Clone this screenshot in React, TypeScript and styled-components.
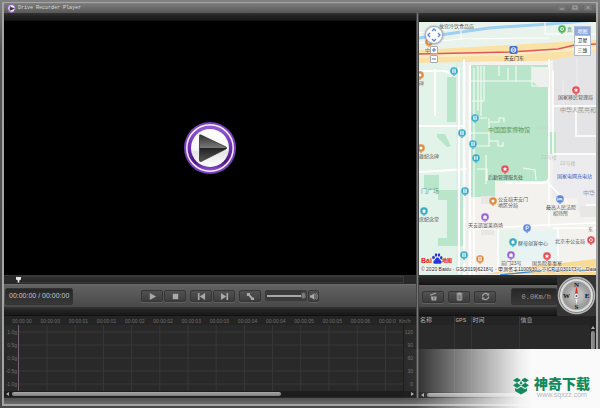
import React from "react";
import styled, { createGlobalStyle } from "styled-components";

const sans = `"Liberation Sans", "Noto Sans CJK SC", sans-serif`;
const mono = `"Liberation Mono", "Noto Sans CJK SC", monospace`;

const GlobalStyle = createGlobalStyle`
  * { box-sizing: border-box; }
  html, body, #root { height: 100%; margin: 0; }
  body { background: #464646; font-family: ${sans}; overflow: hidden; }
  button { padding: 0; margin: 0; font-family: inherit; cursor: pointer; }
  svg { display: block; }
`;

const Frame = styled.div`
  height: 100%;
  padding: 2px;
  background: linear-gradient(#808080, #555 12%, #484848);
  position: relative;
`;

const Window = styled.div`
  height: 100%;
  display: flex;
  flex-direction: column;
  border: 2px solid #a4a4a4;
  border-top: 1px solid #a8a8a8;
  background: #1a1a1a;
`;

const TitleBar = styled.header`
  flex: none;
  height: 10px;
  display: flex;
  align-items: center;
  gap: 2px;
  padding: 0 3px;
  background: linear-gradient(#7e7e7e, #575757);
`;

const Title = styled.h1`
  flex: 1;
  margin: 0;
  font: 400 5px/8px ${mono};
  color: #dcdcdc;
`;

const WindowButtons = styled.div`
  display: flex;
  gap: 3px;
`;

const WindowButton = styled.button`
  width: 10px;
  height: 6px;
  margin-bottom: 1px;
  display: grid;
  place-items: center;
  border: 1px solid #686868;
  border-top: 0;
  background: #747474;
`;

const Main = styled.main`
  flex: 1;
  min-height: 0;
  display: grid;
  grid-template-columns: minmax(0, 1fr) 3px 177px;
`;

const Pane = styled.section`
  min-width: 0;
  min-height: 0;
  display: flex;
  flex-direction: column;
`;

const Divider = styled.div`
  background: linear-gradient(90deg, #2a2a2a, #777 50%, #2a2a2a);
`;

const Band = styled.div<{ $height: number }>`
  flex: none;
  height: ${(p) => p.$height}px;
  background: linear-gradient(#343434, #222 45%, #181818);
  border-bottom: 1px solid #111;
`;

const Video = styled.div`
  flex: 1;
  min-height: 0;
  display: grid;
  place-items: center;
  background: #000;
`;

const BigPlay = styled.button`
  border: 0;
  border-radius: 50%;
  background: none;
`;

const Timeline = styled.div`
  flex: none;
  height: 10px;
  display: flex;
  padding: 0 12px;
  background: #292929;
  border-top: 1px solid #333;
  border-bottom: 1px solid #6c6c6c;
`;

const SeekBar = styled.input`
  appearance: none;
  flex: 1;
  min-width: 0;
  height: 7px;
  margin: 0;
  background: linear-gradient(#303030, #252525);
  border: 1px solid #3a3a3a;
  border-left: 0;
  &::-webkit-slider-thumb {
    appearance: none;
    width: 5px;
    height: 6px;
    background: #e8e8e8;
    clip-path: polygon(0 0, 100% 0, 100% 50%, 65% 65%, 65% 100%, 35% 100%, 35% 65%, 0 50%);
  }
`;

const Toolbar = styled.div`
  flex: none;
  height: 22px;
  display: flex;
  align-items: center;
  padding: 0 1px;
  background: linear-gradient(#626262, #484848);
`;

const Readout = styled.output<{ $mono?: boolean }>`
  height: 17px;
  flex: none;
  display: flex;
  align-items: center;
  padding: 0 ${(p) => (p.$mono ? 5 : 3)}px;
  border: 1px solid #333;
  border-radius: 2px;
  background: linear-gradient(#262626, #383838);
  color: ${(p) => (p.$mono ? "#9a9a9a" : "#c8c8c8")};
  font: 400 7px/8px ${(p) => (p.$mono ? mono : sans)};
  white-space: nowrap;
`;

const Controls = styled.div`
  display: flex;
  align-items: center;
  gap: 4px;
  margin-left: 68px;
`;

const ButtonGroup = styled.div<{ $gap?: number }>`
  display: flex;
  gap: ${(p) => p.$gap ?? 1}px;
`;

const ToolButton = styled.button<{ $width?: number }>`
  width: ${(p) => p.$width ?? 22}px;
  height: 12px;
  display: grid;
  place-items: center;
  border: 1px solid #363636;
  border-radius: 2px;
  background: linear-gradient(#525252, #3d3d3d);
  box-shadow: 0 1px 0 #606060;
  color: #a9a9a9;
`;

const Volume = styled.label`
  display: flex;
  align-items: center;
  width: 42px;
  height: 11px;
  padding: 0 1px 0 2px;
  border-radius: 2px;
  background: #3b3b3b;
`;

const VolumeRange = styled.input`
  appearance: none;
  width: 100%;
  height: 8px;
  margin: 0;
  background: linear-gradient(#0000 3px, #a8a8a8 3px, #a8a8a8 5px, #0000 5px);
  &::-webkit-slider-thumb {
    appearance: none;
    width: 5px;
    height: 7px;
    border-radius: 3px;
    border: 1px solid #555;
    background: #7d7d7d;
  }
`;

const ChartArea = styled.div`
  flex: none;
  height: 82px;
  display: flex;
  flex-direction: column;
  overflow: hidden;
  background: #292929;
`;

const ChartSlot = styled.div`
  height: 75px;
  overflow: hidden;
`;

const ScrollRow = styled.div`
  height: 6px;
  flex: none;
  display: flex;
  align-items: center;
  justify-content: space-between;
  gap: 2px;
  padding: 0 2px;
  background: #1d1d1d;
`;

const ScrollTrack = styled.div`
  flex: 1;
`;

const ScrollThumb = styled.div<{ $size: number }>`
  width: ${(p) => p.$size}%;
  height: 4px;
  border-radius: 2px;
  background: linear-gradient(#a8a8a8, #7c7c7c);
`;

const StatusBar = styled.footer`
  flex: none;
  height: 6px;
  background: linear-gradient(#505050, #6c6c6c);
`;

const MapPane = styled.div`
  flex: 1;
  min-height: 0;
  position: relative;
  overflow: hidden;
  background: #f3f2ee;
`;

const PanButton = styled.button`
  position: absolute;
  left: 6px;
  top: 4px;
  width: 18px;
  height: 18px;
  border: 1px solid #aab4c8;
  border-radius: 50%;
  background: #fff;
  box-shadow: 0 0 2px #667;
`;

const ZoomButtons = styled.div`
  position: absolute;
  left: 11px;
  top: 24px;
  display: grid;
  gap: 1px;
`;

const ZoomButton = styled.button`
  width: 8px;
  height: 8px;
  display: grid;
  place-items: center;
  border: 1px solid #a7a9ae;
  border-radius: 1px;
  background: #fff;
`;

const MapTypes = styled.div`
  position: absolute;
  right: 5px;
  top: 4px;
  display: grid;
`;

const MapType = styled.button<{ $active?: boolean }>`
  width: 17px;
  height: 10px;
  border: 1px solid #aebbd8;
  border-top-width: ${(p) => (p.$active ? 1 : 0)}px;
  background: ${(p) => (p.$active ? "#8ea8e0" : "#fff")};
  color: ${(p) => (p.$active ? "#fff" : "#111")};
  font: 400 5px/7px ${sans};
`;

const Console = styled.div`
  flex: none;
  height: 41px;
  display: grid;
  grid-template-columns: minmax(0, 1fr) 39px;
  background: linear-gradient(#484848, #5a5a5a 50%, #3a3a3a);
`;

const ConsoleTools = styled.div`
  display: flex;
  flex-direction: column;
`;

const ConsoleBar = styled.div`
  flex: 1;
  display: flex;
  align-items: center;
  justify-content: space-between;
  padding: 0 0 0 3px;
  border-top: 1px solid #666;
  background: linear-gradient(#5e5e5e, #484848);
`;

const TableArea = styled.div`
  flex: none;
  height: 82px;
  display: flex;
  flex-direction: column;
  background: #292929;
`;

const TableBody = styled.div`
  flex: 1;
  min-height: 0;
  position: relative;
  display: flex;
`;

const FileTable = styled.table`
  flex: 1;
  height: 100%;
  table-layout: fixed;
  border-collapse: collapse;
  color: #b0b0b0;
  font: 400 6px/8px ${mono};
`;

const HeadCell = styled.th<{ $width?: number }>`
  width: ${(p) => (p.$width ? `${p.$width}px` : "auto")};
  height: 9px;
  padding: 0 1px;
  text-align: left;
  font-weight: 400;
  background: #242424;
  border-right: 1px solid #383838;
  &:last-child { border-right: 0; }
`;

const Cell = styled.td`
  border-right: 1px solid #343434;
  &:last-child { border-right: 0; }
`;

const VerticalScroll = styled.div`
  width: 6px;
  display: flex;
  flex-direction: column;
  align-items: center;
  gap: 1px;
  padding-top: 10px;
  background: #222;
`;

const VerticalThumb = styled.div`
  flex: 1;
  width: 4px;
  border-radius: 2px 2px 0 0;
  background: linear-gradient(90deg, #999, #777);
`;

const Brand = styled.a`
  position: absolute;
  right: 0;
  bottom: 0;
  width: 200px;
  height: 59px;
  display: flex;
  align-items: center;
  justify-content: flex-end;
  gap: 4px;
  padding: 15px 10px 0 0;
  background: linear-gradient(90deg, #fafafa00, #fafafa08 8%, #fafafa90 38%, #fafafaf0 60%, #fafafa 66%);
  text-decoration: none;
`;

const BrandText = styled.span`
  display: grid;
  justify-items: center;
`;

const BrandName = styled.strong`
  font: 900 14px/16px "Noto Sans CJK SC", sans-serif;
  color: #128a5c;
`;

const BrandUrl = styled.small`
  font: 400 7px/7px ${sans};
  color: #b4b8b6;
`;

function PlayLogo({ size }: { size: number }) {
  return (
    <svg width={size} height={size} viewBox="0 0 54 54" aria-hidden="true">
      <defs>
        <linearGradient id="ring" x1="0" y1="0" x2="0" y2="1">
          <stop offset="0" stopColor="#9660d4" />
          <stop offset=".5" stopColor="#6a2fae" />
          <stop offset=".8" stopColor="#4b1784" />
          <stop offset="1" stopColor="#9857d8" />
        </linearGradient>
        <linearGradient id="disc" x1="0" y1="0" x2="0" y2="1">
          <stop offset="0" stopColor="#fff" />
          <stop offset=".55" stopColor="#f7f7f7" />
          <stop offset=".6" stopColor="#e4e4e4" />
          <stop offset="1" stopColor="#fff" />
        </linearGradient>
        <linearGradient id="tri" x1="0" y1="0" x2="0" y2="1">
          <stop offset="0" stopColor="#333" />
          <stop offset=".48" stopColor="#777" />
          <stop offset=".5" stopColor="#222" />
          <stop offset="1" stopColor="#555" />
        </linearGradient>
      </defs>
      <circle cx="27" cy="27" r="26" fill="#7a40be" />
      <circle cx="27" cy="27" r="23.2" fill="url(#ring)" stroke="#f5effa" strokeWidth="1.500" />
      <circle cx="27" cy="27" r="19" fill="url(#disc)" />
      <path d="M16.500 15.500q-.5-2.500 1.500-1.500L43 26q1.500 1 0 2L18 40.500q-1.500.5-1.500-1.500z" fill="url(#tri)" stroke="#333" strokeWidth=".8" />
    </svg>
  );
}

type GlyphName = "play" | "stop" | "prev" | "next" | "expand" | "speaker" | "open" | "trash" | "refresh";

const glyphs: Record<GlyphName, React.ReactNode> = {
  play: <path d="M2 1v8l7-4z" />,
  stop: <path d="M2 2h6v6H2z" />,
  prev: <path d="M1 1h1.800v8H1zM9 1v8L3 5z" />,
  next: <path d="M7.200 1H9v8H7.200zM1 1v8l6-4z" />,
  expand: <path d="M1 1h3.500v2l3 3H9v3H5.500V7.500L3 4.500H1z" />,
  speaker: (
    <>
      <path d="M1 3.500h2L6 1v8L3 6.500H1z" />
      <path d="M7 2.500q2 2.500 0 5M8.300 1.500q2.500 3.500 0 7" fill="none" stroke="currentColor" strokeWidth=".7" />
    </>
  ),
  open: (
    <>
      <path d="M1 3l6.500-2.500.5 1.300L1.500 4.300zM2 5h6.500L8 9.500H3z" />
      <path d="M5.500 5.500v3" stroke="#484848" strokeWidth=".8" />
    </>
  ),
  trash: (
    <>
      <path d="M1.500 1.500h2V.5h3v1h2v1h-7z" />
      <path d="M2.500 3v6h5V3zM4.200 3v6M5.800 3v6" fill="none" stroke="currentColor" />
    </>
  ),
  refresh: (
    <>
      <path d="M1.500 5a3.500 3.500 0 0 1 6-2.300M8.500 5a3.500 3.500 0 0 1-6 2.300" fill="none" stroke="currentColor" strokeWidth="1.300" />
      <path d="M9 1v3H6zM1 9V6h3z" />
    </>
  ),
};

function Glyph({ name }: { name: GlyphName }) {
  return (
    <svg width="9" height="9" viewBox="0 0 10 10" fill="currentColor" aria-hidden="true">
      {glyphs[name]}
    </svg>
  );
}

function Arrow({ d }: { d: string }) {
  return (
    <svg width="4" height="4" viewBox="0 0 4 4" fill="#aaa" aria-hidden="true">
      <path d={d} />
    </svg>
  );
}

const times = ["00", "00", "01", "01", "02", "02", "03", "03", "04", "04", "05", "05", "06"];
const gLevels = ["1.0g", "0.5g", "0.0g", "-0.5g", "-1.0g"];
const speeds = ["120", "90", "60", "30", "0"];

function SensorChart() {
  return (
    <svg width="412" height="75" viewBox="4 316 412 75" fontFamily="Liberation Sans, sans-serif" fontSize="5" fill="#707070">
      <rect x="4" y="316" width="412" height="9" fill="#242424" />
      {gLevels.map((g, i) => (
        <g key={g}>
          <path d={`M18 ${332 + i * 13}H403`} stroke="#383838" />
          <text x="17" y={334 + i * 13} textAnchor="end">{g}</text>
          <text x="413" y={334 + i * 13} textAnchor="end">{speeds[i]}</text>
        </g>
      ))}
      {times.map((t, i) => (
        <g key={i}>
          <text x={22 + i * 28.2} y="323" textAnchor="middle">00:00:{t}</text>
          <path d={`M${47 + i * 28.2} 325V391`} stroke="#383838" />
        </g>
      ))}
      <text x="379" y="323">00:00:0</text>
      <text x="399" y="323">Km/h</text>
      <path d="M18.500 325V391" stroke="#75647a" />
      <path d="M403.500 325V391" stroke="#2d1038" />
    </svg>
  );
}

const colours = { teal: "#35a9c4", orange: "#dd8b3f", purple: "#9a5fd6", blue: "#5c84dc", red: "#e64c55", green: "#4cb45b" };
type Pin = [number, number, keyof typeof colours, string];
const pins: Pin[] = [
  [454, 71, "teal", "box"], [475, 118, "teal", "box"], [462, 133, "teal", "box"], [473, 144, "teal", "box"],
  [476, 158, "teal", "bars"], [465, 191, "teal", "box"], [424, 211, "teal", "house"], [464, 255, "teal", "box"],
  [513, 242, "teal", "house"], [429, 42, "orange", "dot"], [420, 75, "orange", "dot"], [421, 148, "orange", "dot"],
  [493, 201, "orange", "dot"], [480, 259, "orange", "box"], [485, 217, "purple", "bag"], [511, 255, "purple", "bag"],
  [560, 199, "blue", "bed"], [527, 228, "blue", "park"], [576, 90, "red", "star"], [505, 169, "red", "star"],
  [547, 256, "red", "star"], [591, 240, "red", "ring"], [562, 29, "green", "ring"],
];

const pinMarks: Record<string, React.ReactNode> = {
  box: <path d="M-1.500-1.800h3v3.500h-3zM-.8-.6H.8M-.8.5H.8" fill="none" stroke="#fff" strokeWidth=".7" />,
  bars: <path d="M-1.200-1.800v3.600M1.200-1.800v3.600" stroke="#fff" strokeWidth="1.300" />,
  house: <path d="M-2 0L0-2 2 0H1.400v1.800h-2.800V0z" fill="#fff" />,
  dot: <circle r="1.500" fill="#fff" />,
  bag: <path d="M-1.500-.7h3v2.500h-3zM-.8-.7q.8-2.200 1.600 0" fill="#fff" stroke="#fff" strokeWidth=".4" />,
  bed: <path d="M-2.200-1.500v3M-2.200.7h4.400v.8M-1-.5h2.700v1" fill="none" stroke="#fff" strokeWidth=".8" />,
  park: <path d="M-.9 2v-3.800H.5a1.100 1.100 0 0 1 0 2.200H-.9" fill="none" stroke="#fff" strokeWidth=".9" />,
  star: <path d="M0-2.300L.7-.7l1.700.1L1.100.5l.4 1.700L0 1.300l-1.500.9.4-1.700-1.300-1.100 1.700-.1z" fill="#fff" />,
  ring: <circle r="1.500" fill="none" stroke="#fff" strokeWidth=".9" />,
};

type Label = [string, number, number, number, string];
const labels: Label[] = [
  ["故宫冷饮食品店", 439, 28, 5, "#555"],
  ["真", 567, 31, 5, "#479b57"],
  ["中", 425, 52, 5, "#777"],
  ["天安门东", 504, 60, 5, "#222"],
  ["国家移民管理局", 558, 99, 5, "#555"],
  ["中华人民共和", 560, 112, 6, "#999"],
  ["中国国家博物馆", 488, 132, 6, "#529a6a"],
  ["2号楼", 536, 129, 5, "#c8d6cc"],
  ["22号楼", 541, 159, 5, "#bdc7c0"],
  ["22号楼", 560, 165, 5, "#bbb"],
  ["国家电网充电站", 557, 178, 5, "#3c5fbf"],
  ["后勤管理服务处", 488, 179, 5, "#465a4c"],
  ["碑", 419, 85, 5, "#96664a"],
  ["雄纪念碑", 419, 158, 5, "#6b5c50"],
  ["门广场", 421, 193, 6, "#64a17a"],
  ["席纪念堂", 419, 221, 5, "#555"],
  ["公安局天安门", 498, 201, 5, "#555"],
  ["地区分局", 498, 207, 5, "#555"],
  ["中华", 583, 195, 6, "#999"],
  ["最高人民法院", 546, 209, 5, "#555"],
  ["招待所", 553, 215, 5, "#555"],
  ["天安凯富莱商场", 468, 227, 5, "#555"],
  ["东", 588, 231, 5, "#555"],
  ["北京市公安局", 555, 243, 5, "#555"],
  ["酵母创客中心", 518, 245, 5, "#3f6670"],
  ["前门23号", 501, 265, 5, "#555"],
  ["国务院参事室", 532, 265, 5, "#555"],
];

function CityMap() {
  return (
    <svg width="100%" height="100%" viewBox="419 22 177 253" preserveAspectRatio="xMidYMid slice" role="img" aria-label="地图" fontFamily="Liberation Sans, Noto Sans CJK SC, sans-serif">
      <path d="M419 22h177v253H419z" fill="#f3f2ef" />
      <path d="M419 22h177v20l-177 11z" fill="#e9f2eb" />
      <path d="M419 62h46v213h-46z" fill="#e2f3ea" />
      <path d="M553 57l43-9v105h-43z" fill="#e4e4e6" />
      <path d="M553 154h43v56l-18 2v-14h-26z" fill="#ececee" />
      <path d="M496 230h62v32h-60z" fill="#e8f3f4" />
      <path d="M496 230h23v32h-21z" fill="#e5f3eb" />
      <path d="M419 38l70-10 60-4 47-4" stroke="#9dd0f3" strokeWidth="3" fill="none" />
      <path d="M419 43l52-5M471 39l50-1h28M461 26v14M545 22v12h51M419 33l50-7" stroke="#fff" strokeWidth="1" fill="none" />
      <path d="M471 65h78v112q-1 4-6 4h-48v16h-24z" fill="#b9e5cb" />
      <path d="M447 77h9v45h-9zM437 134h8l6 12-4 1-10-10zM438 190h25v56h-25v-8h9v-38h-9zM424 175h15v14h-15zM550 132h6v22h-6z" fill="#b9e5cb" />
      <path d="M419 50l91-5 86-5v12l-50 9H510l-91 2z" fill="#fae1a6" />
      <path d="M419 56l86-2 91-6" stroke="#fdecc7" strokeWidth="3" fill="none" />
      <path d="M419 54l91-2 48-3 17-4 21-1" stroke="#e05656" strokeWidth="1.300" fill="none" />
      <path d="M464 59v216M470 65v210M419 126h44M419 172l48-3M435 69v47M419 71h26l10 5M459 68v206M549 59v118q0 6-7 6h-37" stroke="#fff" strokeWidth="2" fill="none" />
      <path d="M461 60v215M467 62v213M457 60v215" stroke="#d6e1df" strokeWidth=".5" fill="none" />
      <path d="M474 68v130M481 66v50M470 118h17M470 133h19M470 146h20M489 118v28M472 101h12V66M478 66v45M471 81h62M532 66v20h15M499 66v10M508 68v12M516 66v16M490 122h9v-4h5v4M489 141h9v5h5v-4M486 155v29M523 168l12 2 1 10M477 169h10v12" stroke="#f6fbf7" strokeWidth="1.100" fill="none" />
      <path d="M532 67h17v20h-10l-7-6z" fill="#eef0ed" />
      <path d="M552 106h44M576 110v26h20M553 154h43M553 70v90M553 228h43M470 229l75-4 51-2M549 181v46M548 183l20 20M474 198v77M498 229v45M558 228v34M586 205h10" stroke="#fff" strokeWidth="1.500" fill="none" />
      <path d="M577 58v31M563 79v25M590 106v5" stroke="#eee" fill="none" />
      <path d="M485 274l50-8 61-7v16z" fill="#f8d995" />
      <path d="M500 275l38-4 58-1" stroke="#3b8ad2" strokeWidth="1.300" fill="none" />
      <path d="M481 196h13v8h-13zM481 230h13v5h-13zM580 206h16v11h-16z" fill="#e7e7e6" />
      {pins.map(([x, y, c, mark], i) => (
        <g key={i} transform={`translate(${x} ${y})`}>
          <path d="M0 5.300L-2.500 2.500h5z" fill={colours[c]} />
          <circle r="4" fill={colours[c]} stroke="#ffffffa0" strokeWidth=".5" />
          {pinMarks[mark]}
        </g>
      ))}
      <rect x="509.500" y="46" width="8" height="8" rx="1.500" fill="#3e70da" />
      <circle cx="513.500" cy="50" r="2.300" fill="none" stroke="#fff" />
      <path d="M512 50h3" stroke="#fff" />
      {labels.map(([t, x, y, size, fill], i) => (
        <text key={i} x={x} y={y} fontSize={size} fill={fill}>{t}</text>
      ))}
      <text x="421" y="263" fontSize="7" fontWeight="700" fill="#e2231c">Bai</text>
      <g fill="#2834d8">
        <ellipse cx="433.500" cy="257.500" rx="1.300" ry="1.800" />
        <ellipse cx="436" cy="255" rx="1.200" ry="1.800" />
        <ellipse cx="439" cy="255" rx="1.200" ry="1.800" />
        <ellipse cx="441.200" cy="257.800" rx="1.200" ry="1.700" />
        <path d="M437.300 257.500c2 0 2 2 3.700 3.300 1.300 1.200.5 3-1 3h-5.200c-1.700 0-2-2-.8-3 1.600-1.300 1.400-3.300 3.300-3.300z" />
      </g>
      <text x="442" y="262" fontSize="5" fontWeight="700" fill="#e2231c">地图</text>
      <text x="421" y="271" fontSize="5" fill="#222" stroke="#fff" strokeWidth="1" paintOrder="stroke">
        © 2020 Baidu - GS(2019)6218号 - 甲测资字1100930 - 京ICP证030173号 - Data © 长
      </text>
    </svg>
  );
}

function Compass() {
  return (
    <svg width="39" height="41" viewBox="557 275 39 41" role="img" aria-label="指南针" fontFamily="Liberation Serif, serif" fontSize="7" fontWeight="700" fill="#111" textAnchor="middle">
      <defs>
        <radialGradient id="dial">
          <stop offset="0" stopColor="#d8d8d8" />
          <stop offset=".8" stopColor="#999" />
          <stop offset="1" stopColor="#aaa" />
        </radialGradient>
      </defs>
      <rect x="557" y="275" width="39" height="41" fill="#353535" />
      <circle cx="576.500" cy="295.500" r="18" fill="#747474" stroke="#b8b8b8" strokeWidth="1.500" />
      <circle cx="576.500" cy="295.500" r="15.500" fill="url(#dial)" stroke="#ddd" strokeWidth="2" />
      <text x="576.500" y="287">N</text>
      <text x="566.500" y="298">W</text>
      <text x="587" y="298">E</text>
      <text x="576.500" y="309">S</text>
      <path d="M576.500 286l2 10h-4z" fill="#e52525" />
      <path d="M576.500 306l2-10h-4z" fill="#f7f7f7" stroke="#777" strokeWidth=".3" />
      <circle cx="576.500" cy="296" r="2.800" fill="#eee" stroke="#777" strokeWidth=".6" />
      <circle cx="576.500" cy="296" r="1" fill="#555" />
    </svg>
  );
}

function BoxLogo() {
  return (
    <svg width="18" height="18" viewBox="0 0 18 18" aria-hidden="true">
      <path d="M5.200.8L9 3.200 5 5.800 1 3.300zM12.800.8L17 3.300 13 5.800 9 3.200zM1 8.300l4-2.500 4 2.700-4 2.600zM17 8.300l-4-2.500-4 2.700 4 2.600z" fill="#128a5c" />
      <path d="M3 11l2 1.300L9 9.700l4 2.600 2-1.300v3l-6 3.600L3 14z" fill="#128a5c" />
      <path d="M9 3.300L5.200 5.800 9 8.300l3.800-2.500z" fill="#fff" />
      <path d="M8.200 4.500h1.600v1.300h1.200L9 7.800 7 5.800h1.200z" fill="#128a5c" />
    </svg>
  );
}

const columns = [
  { name: "名称", width: 35 },
  { name: "GPS", width: 17 },
  { name: "时间", width: 48 },
  { name: "信息" },
];

export default function App() {
  return (
    <>
      <GlobalStyle />
      <Frame>
        <Window>
          <TitleBar>
            <PlayLogo size={9} />
            <Title>Drive Recorder Player</Title>
            <WindowButtons>
              {[
                ["最小化", "M1 4h4"],
                ["最大化", "M1 1h4v3H1z"],
                ["关闭", "M1.500 1l3 3M4.500 1l-3 3"],
              ].map(([name, d]) => (
                <WindowButton key={name} aria-label={name}>
                  <svg width="6" height="5" viewBox="0 0 6 5" fill="none" stroke="#b4b4b4" strokeWidth=".8"><path d={d} /></svg>
                </WindowButton>
              ))}
            </WindowButtons>
          </TitleBar>
          <Main>
            <Pane>
              <Band $height={8} />
              <Video>
                <BigPlay aria-label="播放视频"><PlayLogo size={54} /></BigPlay>
              </Video>
              <Timeline>
                <SeekBar type="range" aria-label="进度" defaultValue={0} />
              </Timeline>
              <Toolbar>
                <Readout>00:00:00 / 00:00:00</Readout>
                <Controls>
                  <ButtonGroup>
                    <ToolButton aria-label="播放"><Glyph name="play" /></ToolButton>
                    <ToolButton aria-label="停止"><Glyph name="stop" /></ToolButton>
                  </ButtonGroup>
                  <ButtonGroup>
                    <ToolButton aria-label="上一个"><Glyph name="prev" /></ToolButton>
                    <ToolButton aria-label="下一个"><Glyph name="next" /></ToolButton>
                  </ButtonGroup>
                  <ToolButton aria-label="全屏"><Glyph name="expand" /></ToolButton>
                  <ButtonGroup>
                    <Volume><VolumeRange type="range" aria-label="音量" defaultValue={100} /></Volume>
                    <ToolButton $width={11} aria-label="静音"><Glyph name="speaker" /></ToolButton>
                  </ButtonGroup>
                </Controls>
              </Toolbar>
              <Band $height={9} />
              <ChartArea>
                <ChartSlot><SensorChart /></ChartSlot>
                <ScrollRow>
                  <Arrow d="M3 0v4L0 2z" />
                  <ScrollTrack><ScrollThumb $size={68} /></ScrollTrack>
                  <Arrow d="M1 0v4l3-2z" />
                </ScrollRow>
              </ChartArea>
            </Pane>
            <Divider />
            <Pane>
              <Band $height={9} />
              <MapPane>
                <CityMap />
                <PanButton aria-label="平移地图">
                  <svg width="16" height="16" viewBox="0 0 16 16" fill="none" stroke="#5b86d8" strokeWidth="1.400">
                    <path d="M6 4l2-2 2 2M6 12l2 2 2-2M4 6L2 8l2 2M12 6l2 2-2 2" />
                  </svg>
                </PanButton>
                <ZoomButtons>
                  <ZoomButton aria-label="放大"><svg width="6" height="6" stroke="#4b78cf"><path d="M1 3h4M3 1v4" /></svg></ZoomButton>
                  <ZoomButton aria-label="缩小"><svg width="6" height="6" stroke="#4b78cf"><path d="M1 3h4" /></svg></ZoomButton>
                </ZoomButtons>
                <MapTypes>
                  <MapType $active>地图</MapType>
                  <MapType>卫星</MapType>
                  <MapType>三维</MapType>
                </MapTypes>
              </MapPane>
              <Console>
                <ConsoleTools>
                  <Band $height={10} />
                  <ConsoleBar>
                    <ButtonGroup $gap={4}>
                      <ToolButton aria-label="打开"><Glyph name="open" /></ToolButton>
                      <ToolButton aria-label="删除"><Glyph name="trash" /></ToolButton>
                      <ToolButton aria-label="刷新"><Glyph name="refresh" /></ToolButton>
                    </ButtonGroup>
                    <Readout $mono>&nbsp;0.0Km/h</Readout>
                  </ConsoleBar>
                  <Band $height={9} />
                </ConsoleTools>
                <Compass />
              </Console>
              <TableArea>
                <TableBody>
                  <FileTable>
                    <thead>
                      <tr>{columns.map((c) => <HeadCell key={c.name} $width={c.width}>{c.name}</HeadCell>)}</tr>
                    </thead>
                    <tbody>
                      <tr>{columns.map((c) => <Cell key={c.name} />)}</tr>
                    </tbody>
                  </FileTable>
                  <VerticalScroll>
                    <Arrow d="M0 3h4L2 0z" />
                    <VerticalThumb />
                  </VerticalScroll>
                </TableBody>
                <ScrollRow>
                  <Arrow d="M3 0v4L0 2z" />
                  <ScrollTrack><ScrollThumb $size={80} /></ScrollTrack>
                  <Arrow d="M1 0v4l3-2z" />
                </ScrollRow>
              </TableArea>
            </Pane>
          </Main>
          <StatusBar />
        </Window>
        <Brand href="#download">
          <BoxLogo />
          <BrandText>
            <BrandName>神奇下载</BrandName>
            <BrandUrl>www.sqxzz.com</BrandUrl>
          </BrandText>
        </Brand>
      </Frame>
    </>
  );
}
